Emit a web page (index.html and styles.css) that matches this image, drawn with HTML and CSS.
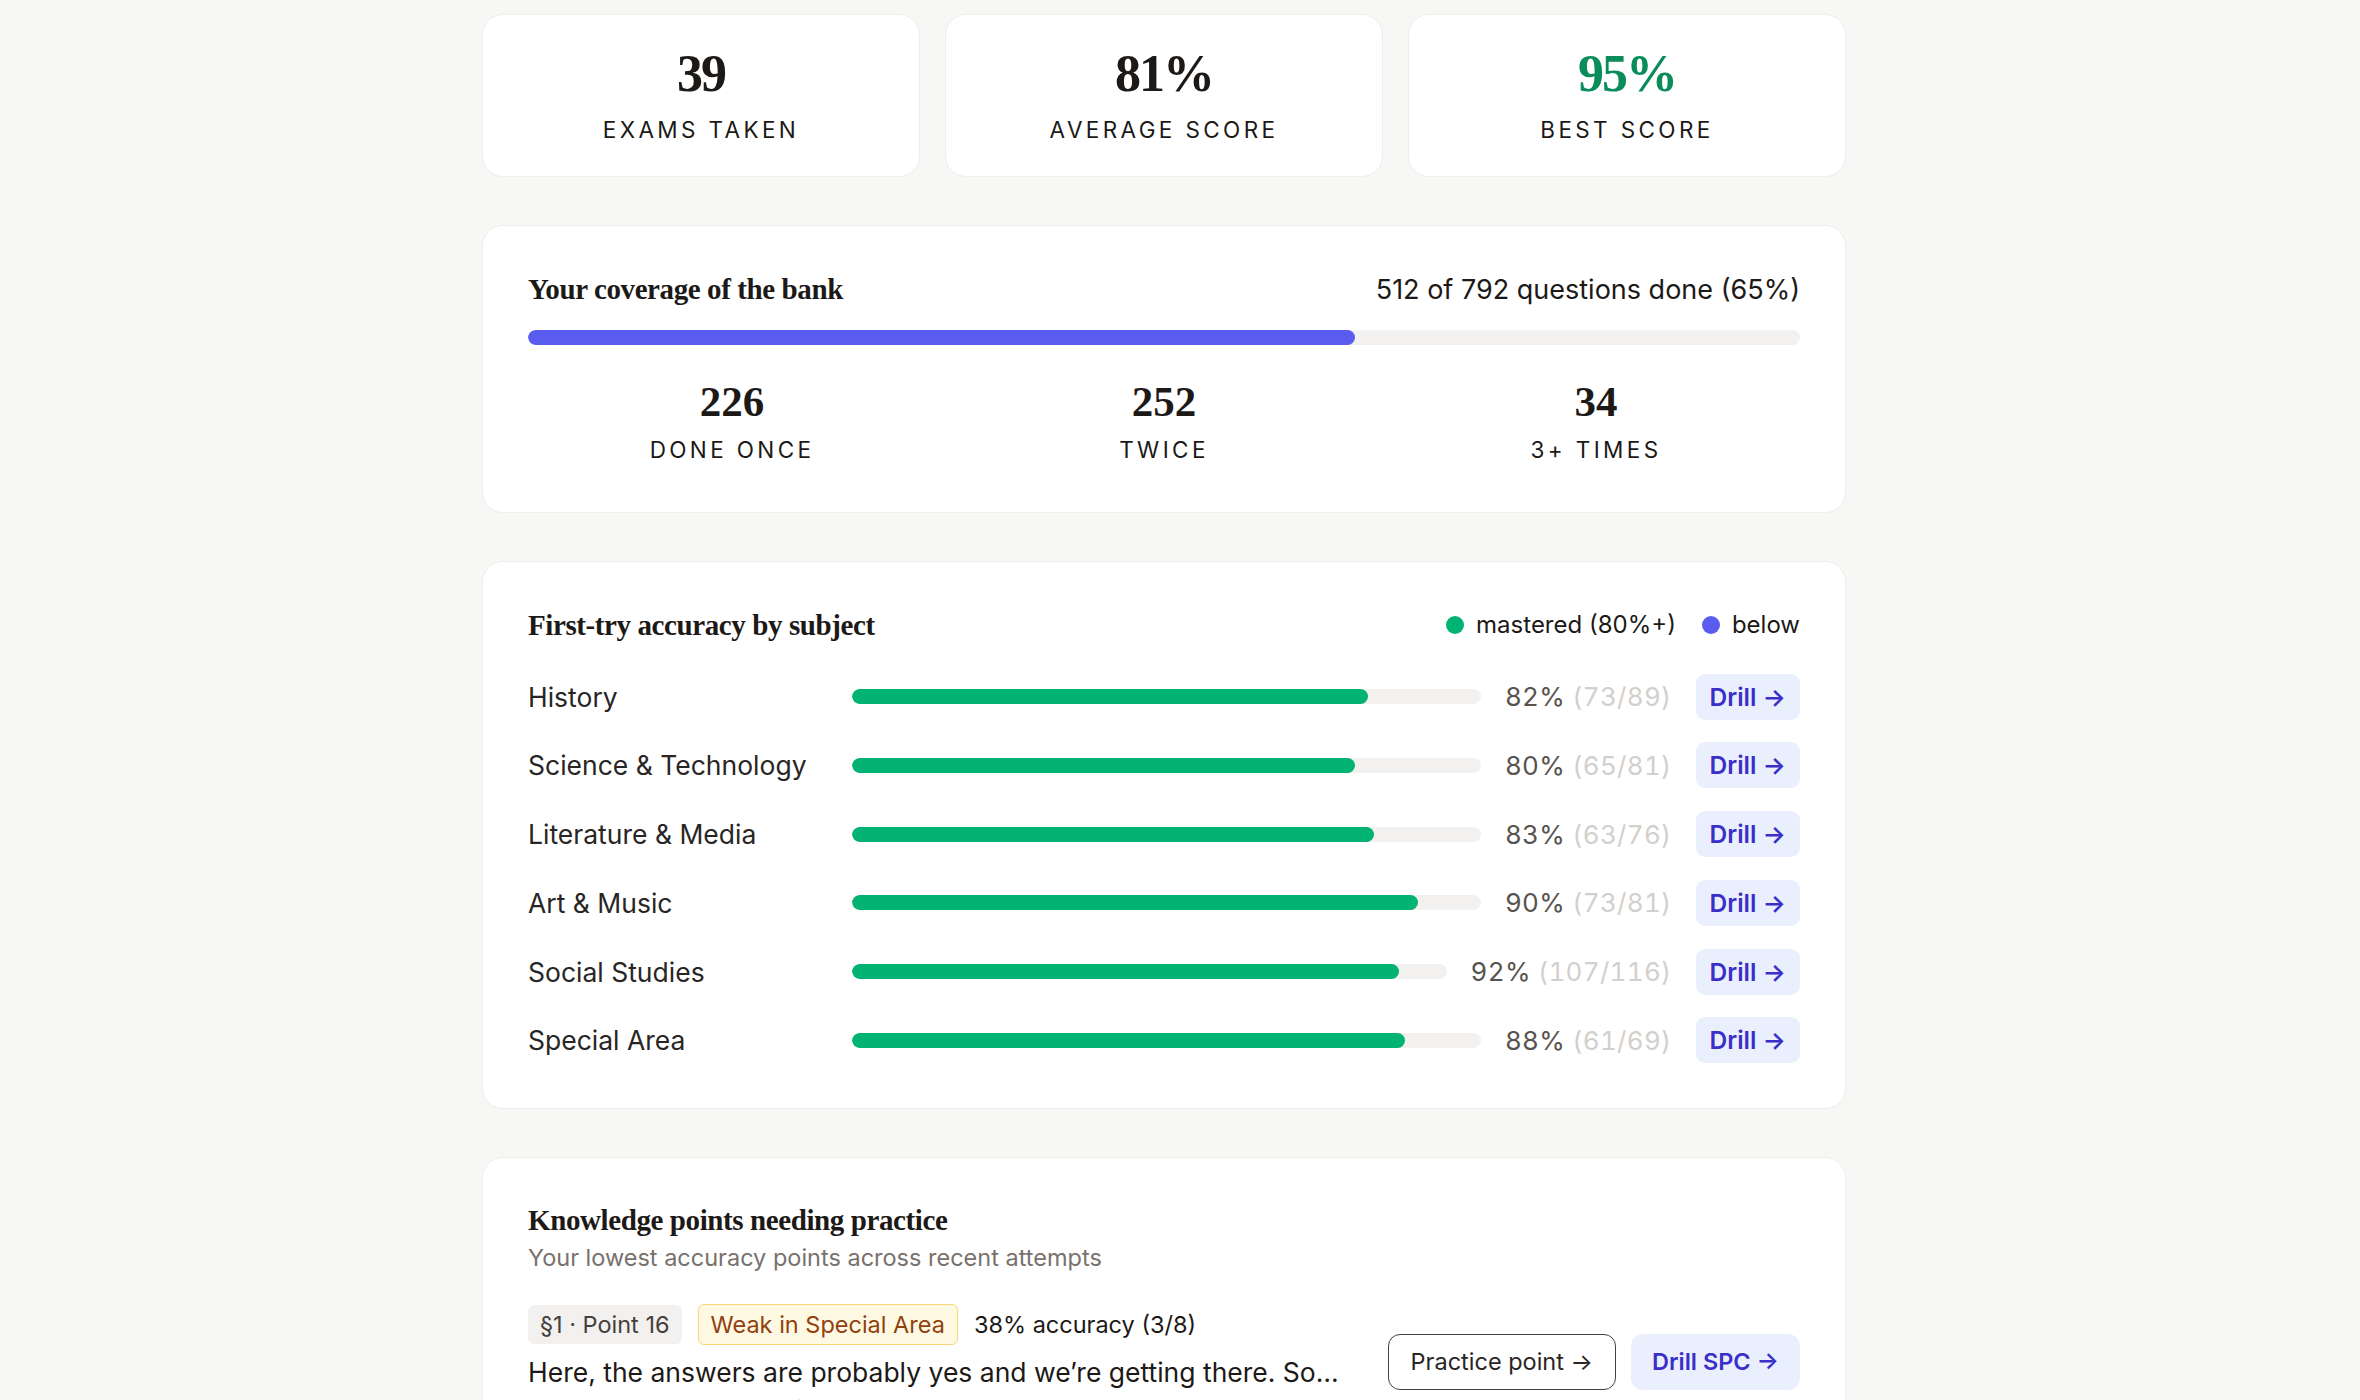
FILE: index.html
```html
<!DOCTYPE html>
<html lang="en">
<head>
    <meta charset="UTF-8">
    <meta name="viewport" content="width=device-width, initial-scale=1.0">
    <title>Progress</title>
    <link rel="stylesheet" href="styles.css">
</head>
<body>
<div class="page">

    <!-- Headline numbers -->
    <div class="stats">
        <div class="card stat">
            <div class="stat-num">39</div>
            <div class="stat-label">Exams taken</div>
        </div>
        <div class="card stat">
            <div class="stat-num">81%</div>
            <div class="stat-label">Average score</div>
        </div>
        <div class="card stat">
            <div class="stat-num best">95%</div>
            <div class="stat-label">Best score</div>
        </div>
    </div>

    <!-- Coverage -->
    <div class="card section coverage">
        <div class="section-head">
            <h3 class="section-title">Your coverage of the bank</h3>
            <span class="coverage-count">512 of 792 questions done (65%)</span>
        </div>
        <div class="track coverage-track"><div class="fill indigo" style="width: 65%"></div></div>
        <div class="breakdown">
            <div class="breakdown-item">
                <div class="breakdown-num">226</div>
                <div class="stat-label">Done once</div>
            </div>
            <div class="breakdown-item">
                <div class="breakdown-num">252</div>
                <div class="stat-label">Twice</div>
            </div>
            <div class="breakdown-item">
                <div class="breakdown-num">34</div>
                <div class="stat-label">3+ times</div>
            </div>
        </div>
    </div>

    <!-- Accuracy by subject -->
    <div class="card section accuracy">
        <div class="section-head">
            <h3 class="section-title">First-try accuracy by subject</h3>
            <div class="legend">
                <span class="legend-item"><span class="dot green"></span>mastered (80%+)</span>
                <span class="legend-item"><span class="dot indigo"></span>below</span>
            </div>
        </div>
        <div class="subjects">
            <div class="subject">
                <span class="subject-name">History</span>
                <div class="track"><div class="fill green" style="width: 82%"></div></div>
                <span class="subject-score">82% <span class="muted">(73/89)</span></span>
                <button class="drill">Drill →</button>
            </div>
            <div class="subject">
                <span class="subject-name">Science &amp; Technology</span>
                <div class="track"><div class="fill green" style="width: 80%"></div></div>
                <span class="subject-score">80% <span class="muted">(65/81)</span></span>
                <button class="drill">Drill →</button>
            </div>
            <div class="subject">
                <span class="subject-name">Literature &amp; Media</span>
                <div class="track"><div class="fill green" style="width: 83%"></div></div>
                <span class="subject-score">83% <span class="muted">(63/76)</span></span>
                <button class="drill">Drill →</button>
            </div>
            <div class="subject">
                <span class="subject-name">Art &amp; Music</span>
                <div class="track"><div class="fill green" style="width: 90%"></div></div>
                <span class="subject-score">90% <span class="muted">(73/81)</span></span>
                <button class="drill">Drill →</button>
            </div>
            <div class="subject">
                <span class="subject-name">Social Studies</span>
                <div class="track"><div class="fill green" style="width: 92%"></div></div>
                <span class="subject-score">92% <span class="muted">(107/116)</span></span>
                <button class="drill">Drill →</button>
            </div>
            <div class="subject">
                <span class="subject-name">Special Area</span>
                <div class="track"><div class="fill green" style="width: 88%"></div></div>
                <span class="subject-score">88% <span class="muted">(61/69)</span></span>
                <button class="drill">Drill →</button>
            </div>
        </div>
    </div>

    <!-- Weak points -->
    <div class="card section weak">
        <h3 class="section-title">Knowledge points needing practice</h3>
        <p class="section-sub">Your lowest accuracy points across recent attempts</p>
        <div class="point">
            <div class="point-body">
                <div class="point-tags">
                    <span class="tag">§1 · Point 16</span>
                    <span class="tag warn">Weak in Special Area</span>
                    <span class="point-acc">38% accuracy (3/8)</span>
                </div>
                <div class="point-text">Here, the answers are probably yes and we’re getting there. So what happens next is up to the reader</div>
                <div class="point-src">From §1 Introductory Questions</div>
            </div>
            <div class="point-actions">
                <button class="btn-outline">Practice point →</button>
                <button class="drill big">Drill SPC →</button>
            </div>
        </div>
    </div>

</div>
</body>
</html>
```

FILE: styles.css
```css
:root {
    --bg:        #f7f7f5;
    --card:      #ffffff;
    --border:    #efeeeb;
    --ink:       #1c1917;
    --ink2:      #292524;
    --stone:     #57534e;
    --muted:     #78716c;
    --faint:     #d3cfcc;
    --track:     #f2f1ef;
    --green:     #03b374;
    --bestGreen: #0a8d5b;
    --indigo:    #5a5cf0;
    --drillBg:   #eaeffd;
    --drillInk:  #3a2fc8;
}

body {
    margin: 0;
    background: var(--bg);
    color: var(--ink);
    font-family: Inter, "Noto Sans", sans-serif;
}

.page {
    width: 1364px;
    margin-left: calc(50% - 698px);
    padding-top: 14px;
    display: flex;
    flex-direction: column;
    gap: 48px;
}

.card {
    background: var(--card);
    border: 1.5px solid var(--border);
    border-radius: 21px;
    box-sizing: border-box;
}

/* top stats */
.stats {
    display: grid;
    grid-template-columns: repeat(3, 1fr);
    gap: 25px;
}

.stat {
    height: 163px;
    padding-top: 33px;
    text-align: center;
}

.stat-num {
    font-family: "Liberation Serif", serif;
    font-weight: bold;
    font-size: 52px;
    line-height: 1;
    letter-spacing: -2px;
}

.stat-num.best { color: var(--bestGreen); }

.stat-label {
    margin-top: 13px;
    font-size: 22.5px;
    line-height: 1.5;
    letter-spacing: 0.15em;
    text-transform: uppercase;
    color: var(--ink);
}

/* sections */
.section {
    padding: 45px;
}

.section.coverage { padding-bottom: 45px; }
.section.weak { padding-top: 44px; }

.section-head {
    display: flex;
    justify-content: space-between;
    align-items: center;
}

.section-title {
    margin: 0;
    font-family: "Liberation Serif", serif;
    font-weight: bold;
    font-size: 29px;
    line-height: 36px;
    letter-spacing: -0.4px;
}

.coverage-count {
    font-size: 27px;
}

.track {
    flex: 1;
    height: 15px;
    background: var(--track);
    border-radius: 8px;
    overflow: hidden;
}

.fill {
    height: 100%;
    border-radius: 8px;
}

.fill.green, .dot.green { background: var(--green); }
.fill.indigo, .dot.indigo { background: var(--indigo); }

.coverage-track {
    margin-top: 23px;
}

.breakdown {
    display: grid;
    grid-template-columns: repeat(3, 1fr);
    column-gap: 24px;
    margin-top: 35px;
    text-align: center;
}

.breakdown-num {
    font-family: "Liberation Serif", serif;
    font-weight: bold;
    font-size: 43px;
    line-height: 1;
}

.breakdown .stat-label { margin-top: 10px; }

/* legend + subject rows */
.legend {
    display: flex;
    gap: 26px;
    font-size: 24px;
}

.legend-item {
    display: flex;
    align-items: center;
    gap: 12px;
}

.dot {
    width: 18px;
    height: 18px;
    border-radius: 50%;
}

.subjects {
    margin-top: 31px;
    display: flex;
    flex-direction: column;
    gap: 22.7px;
}

.subject {
    display: flex;
    align-items: center;
    height: 46px;
}

.subject-name {
    width: 324px;
    flex-shrink: 0;
    font-size: 26.5px;
    color: var(--ink2);
}

.subject-score {
    margin-left: 24px;
    font-size: 26px;
    color: var(--stone);
    font-variant-numeric: tabular-nums;
    letter-spacing: 0.3px;
}

.muted { color: var(--faint); }

.drill {
    margin-left: 24px;
    height: 46px;
    padding: 0 14px;
    border: none;
    border-radius: 9px;
    background: var(--drillBg);
    color: var(--drillInk);
    font-family: inherit;
    font-size: 24.5px;
    font-weight: 600;
}

/* weak points */
.section-sub {
    margin: 2px 0 0;
    font-size: 23.5px;
    line-height: 1.5;
    color: var(--muted);
}

.point {
    margin-top: 29px;
    display: flex;
    align-items: center;
    gap: 45px;
}

.point-body {
    flex: 1;
    min-width: 0;
}

.point-tags {
    display: flex;
    align-items: center;
    gap: 16px;
    font-size: 23.5px;
}

.tag {
    padding: 0 12px;
    line-height: 39px;
    border-radius: 6px;
    background: var(--track);
    color: #44403c;
}

.tag.warn {
    border: 1.5px solid #f8d774;
    background: #fef9e3;
    color: #92400e;
}

.point-acc { color: var(--ink); }

.point-text {
    margin-top: 8px;
    font-size: 26.5px;
    line-height: 1.5;
    white-space: nowrap;
    overflow: hidden;
    text-overflow: ellipsis;
}

.point-src {
    font-size: 21px;
    line-height: 1.5;
    color: var(--muted);
}

.point-actions {
    display: flex;
    gap: 15px;
    margin-top: -6px;
}

.btn-outline {
    height: 56px;
    padding: 0 22px;
    border: 1.5px solid #44403c;
    border-radius: 12px;
    background: #fff;
    color: var(--ink2);
    font-family: inherit;
    font-size: 23.5px;
}

.drill.big {
    margin-left: 0;
    height: 56px;
    padding: 0 21px;
    border-radius: 12px;
    font-size: 23.5px;
}
```
